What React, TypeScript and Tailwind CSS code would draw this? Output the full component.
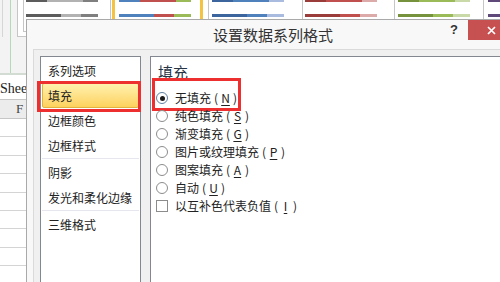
import React from "react";

const cjk = "font-['Noto_Sans_CJK_SC',sans-serif]";

function Mn({ k }: { k: string }) {
  return (
    <span className="inline-flex">
      <span className="w-[10px] text-center">(</span>
      <span className="w-[9px] text-center underline underline-offset-[2px]">{k}</span>
      <span className="w-[10px] text-center">)</span>
    </span>
  );
}

function Thumb({ c }: { c: string[] }) {
  return (
    <div className="w-[72px] flex flex-col">
      <div className="flex h-[2px]">
        <div className={`w-[21px] ${c[0]}`} />
        <div className={`w-[36px] ${c[1]}`} />
        <div className={`w-[15px] ${c[2]}`} />
      </div>
      <div className="h-[12px]" />
      <div className="flex h-[3px]">
        <div className={`w-[35px] ${c[0]}`} />
        <div className={`w-[20px] ${c[1]}`} />
        <div className={`w-[17px] ${c[2]}`} />
      </div>
    </div>
  );
}

function Radio({ on }: { on?: boolean }) {
  return (
    <span
      className={`w-[12px] h-[12px] shrink-0 rounded-full border bg-white flex items-center justify-center mr-[7px] ${
        on ? "border-[#5f7fa0]" : "border-[#8c8c8c]"
      }`}
    >
      {on && <span className="w-[5px] h-[5px] rounded-full bg-[#1c1c1c]" />}
    </span>
  );
}

export default function App() {
  const groups = [
    ["系列选项", "填充", "边框颜色", "边框样式"],
    ["阴影", "发光和柔化边缘"],
    ["三维格式"],
  ];
  const radios: [string, string][] = [
    ["无填充", "N"],
    ["纯色填充", "S"],
    ["渐变填充", "G"],
    ["图片或纹理填充", "P"],
    ["图案填充", "A"],
    ["自动", "U"],
  ];
  return (
    <div className="relative w-[500px] h-[282px] overflow-hidden bg-white">
      {/* Excel background */}
      <div className="flex flex-col w-full h-full">
        <div className="flex items-start h-[75px] shrink-0 bg-[#f3f3f3] border-b-2 border-[#d3dcd3]">
          <div className="w-[2px] shrink-0" />
          <div className="w-px h-[37px] shrink-0 bg-[#d6d6d6]" />
          <div className="w-[7px] shrink-0" />
          <div className="w-px h-[73px] shrink-0 bg-[#b4dab4]" />
          <div className="w-[6px] shrink-0" />
          <div className="flex-1 h-[37px] overflow-hidden border-l border-b border-[#c6c6c6] bg-white pl-[5px]">
            <div className="flex h-[32px] border-b border-[#c6c6c6]">
              <div className="w-[87px] shrink-0 border-l border-[#c6c6c6] pl-[2px]">
                <Thumb c={["bg-[#5c5c5c]", "bg-[#b2b2b2]", "bg-[#7f7f7f]"]} />
              </div>
              <div className="w-[98px] shrink-0 border-l border-[#c6c6c6] pl-[1px]">
                <div className="w-[91px] h-full border-x-[3px] border-[#f5c342] pl-[4px]">
                  <Thumb c={["bg-[#4f81bd]", "bg-[#c0504d]", "bg-[#9bbb59]"]} />
                </div>
              </div>
              <div className="w-[94px] shrink-0 border-l border-[#c6c6c6] pl-[3px]">
                <Thumb c={["bg-[#3b659c]", "bg-[#4f81bd]", "bg-[#a9bcdf]"]} />
              </div>
              <div className="w-[92px] shrink-0 border-l border-[#c6c6c6] pl-[2px]">
                <Thumb c={["bg-[#9a3c3a]", "bg-[#c0504d]", "bg-[#dcaaa9]"]} />
              </div>
              <div className="w-[89px] shrink-0 border-l border-[#c6c6c6] pl-[3px]">
                <Thumb c={["bg-[#76923c]", "bg-[#9bbb59]", "bg-[#c9d9a8]"]} />
              </div>
              <div className="w-[40px] shrink-0 border-l border-[#c6c6c6] pl-[4px]">
                <Thumb c={["bg-[#5f497a]", "bg-[#8064a2]", "bg-[#b3a2c7]"]} />
              </div>
            </div>
          </div>
        </div>
        <div className="h-[25px] shrink-0 border-b border-[#c6c6c6] flex items-center pt-[3px] font-['Liberation_Serif',serif] text-[14px] text-[#222]">
          Sheet1
        </div>
        <div className="h-[19px] shrink-0 bg-[#ececec] border-b border-[#c6c6c6] flex items-center pl-[16px] font-['Liberation_Serif',serif] text-[13px] text-[#444]">
          F
        </div>
        {Array.from({ length: 10 }).map((_, i) => (
          <div key={i} className="h-[18.4px] shrink-0 border-b border-[#d4d4d4]" />
        ))}
      </div>

      {/* Dialog */}
      <div
        className={`absolute left-[26px] top-[19px] w-[490px] h-[290px] border border-[#a9a9a9] bg-[#f8f8f8] flex flex-col ${cjk}`}
      >
        <div className="h-[29px] shrink-0 flex items-start">
          <div className="h-full flex items-center pl-[186px] text-[15px] leading-none text-[#333]">
            设置数据系列格式
          </div>
          <div className="ml-auto mt-[3px] mr-[10px] font-['Liberation_Sans',sans-serif] font-bold text-[13px] leading-[13px] text-[#333]">
            ?
          </div>
          <div className="w-[47px] h-[20px] shrink-0 bg-[#c75050] flex items-center justify-center">
            <svg width="9" height="9" viewBox="0 0 9 9">
              <path d="M1 1 L8 8 M8 1 L1 8" stroke="white" strokeWidth="1.7" />
            </svg>
          </div>
        </div>
        <div className="flex-1 ml-[6px] border-t border-l border-[#dadada] bg-[#f0f0f0] pt-[6px] pl-[6px] flex gap-[9px]">
          {/* left list */}
          <div className="w-[101px] shrink-0 border border-[#828790] bg-white pt-[1px]">
            {groups.map((g, gi) => (
              <div key={gi}>
                {gi > 0 && <div className="mx-[1px] h-px bg-[#e6e6ef] mb-[1px]" />}
                {g.map((t) => {
                  const sel = t === "填充";
                  return (
                    <div
                      key={t}
                      className={`relative mx-[1px] h-[25px] flex items-center pl-[5px] border text-[12px] text-[#222] ${
                        sel
                          ? "rounded-[2px] border-[#e2b13f] bg-gradient-to-b from-[#fff1ad] to-[#fdd25c]"
                          : "border-transparent"
                      }`}
                    >
                      {t}
                      {sel && (
                        <div className="absolute -left-[6px] -top-[3px] w-[104px] h-[31px] border-[3px] border-[#ee2f2f]" />
                      )}
                    </div>
                  );
                })}
              </div>
            ))}
          </div>
          {/* right panel */}
          <div className="flex-1 border border-[#828790] bg-white pl-[5px] pt-[5px]">
            <div className="ml-[2px] text-[15px] leading-[20px] text-[#263445]">填充</div>
            <div className="mt-[7px] flex flex-col text-[12px] text-[#222]">
              {radios.map(([t, k], i) => (
                <div key={t} className="relative h-[18px] flex items-center">
                  <Radio on={i === 0} />
                  <span>{t}</span>
                  <Mn k={k} />
                  {i === 0 && (
                    <div className="absolute -left-[4px] -top-[11px] w-[89px] h-[33px] border-[3px] border-[#ee2f2f]" />
                  )}
                </div>
              ))}
              <div className="h-[18px] flex items-center">
                <span className="w-[12px] h-[12px] shrink-0 border border-[#8c8c8c] bg-white mr-[7px]" />
                <span>以互补色代表负值</span>
                <Mn k="I" />
              </div>
            </div>
          </div>
        </div>
      </div>
    </div>
  );
}
